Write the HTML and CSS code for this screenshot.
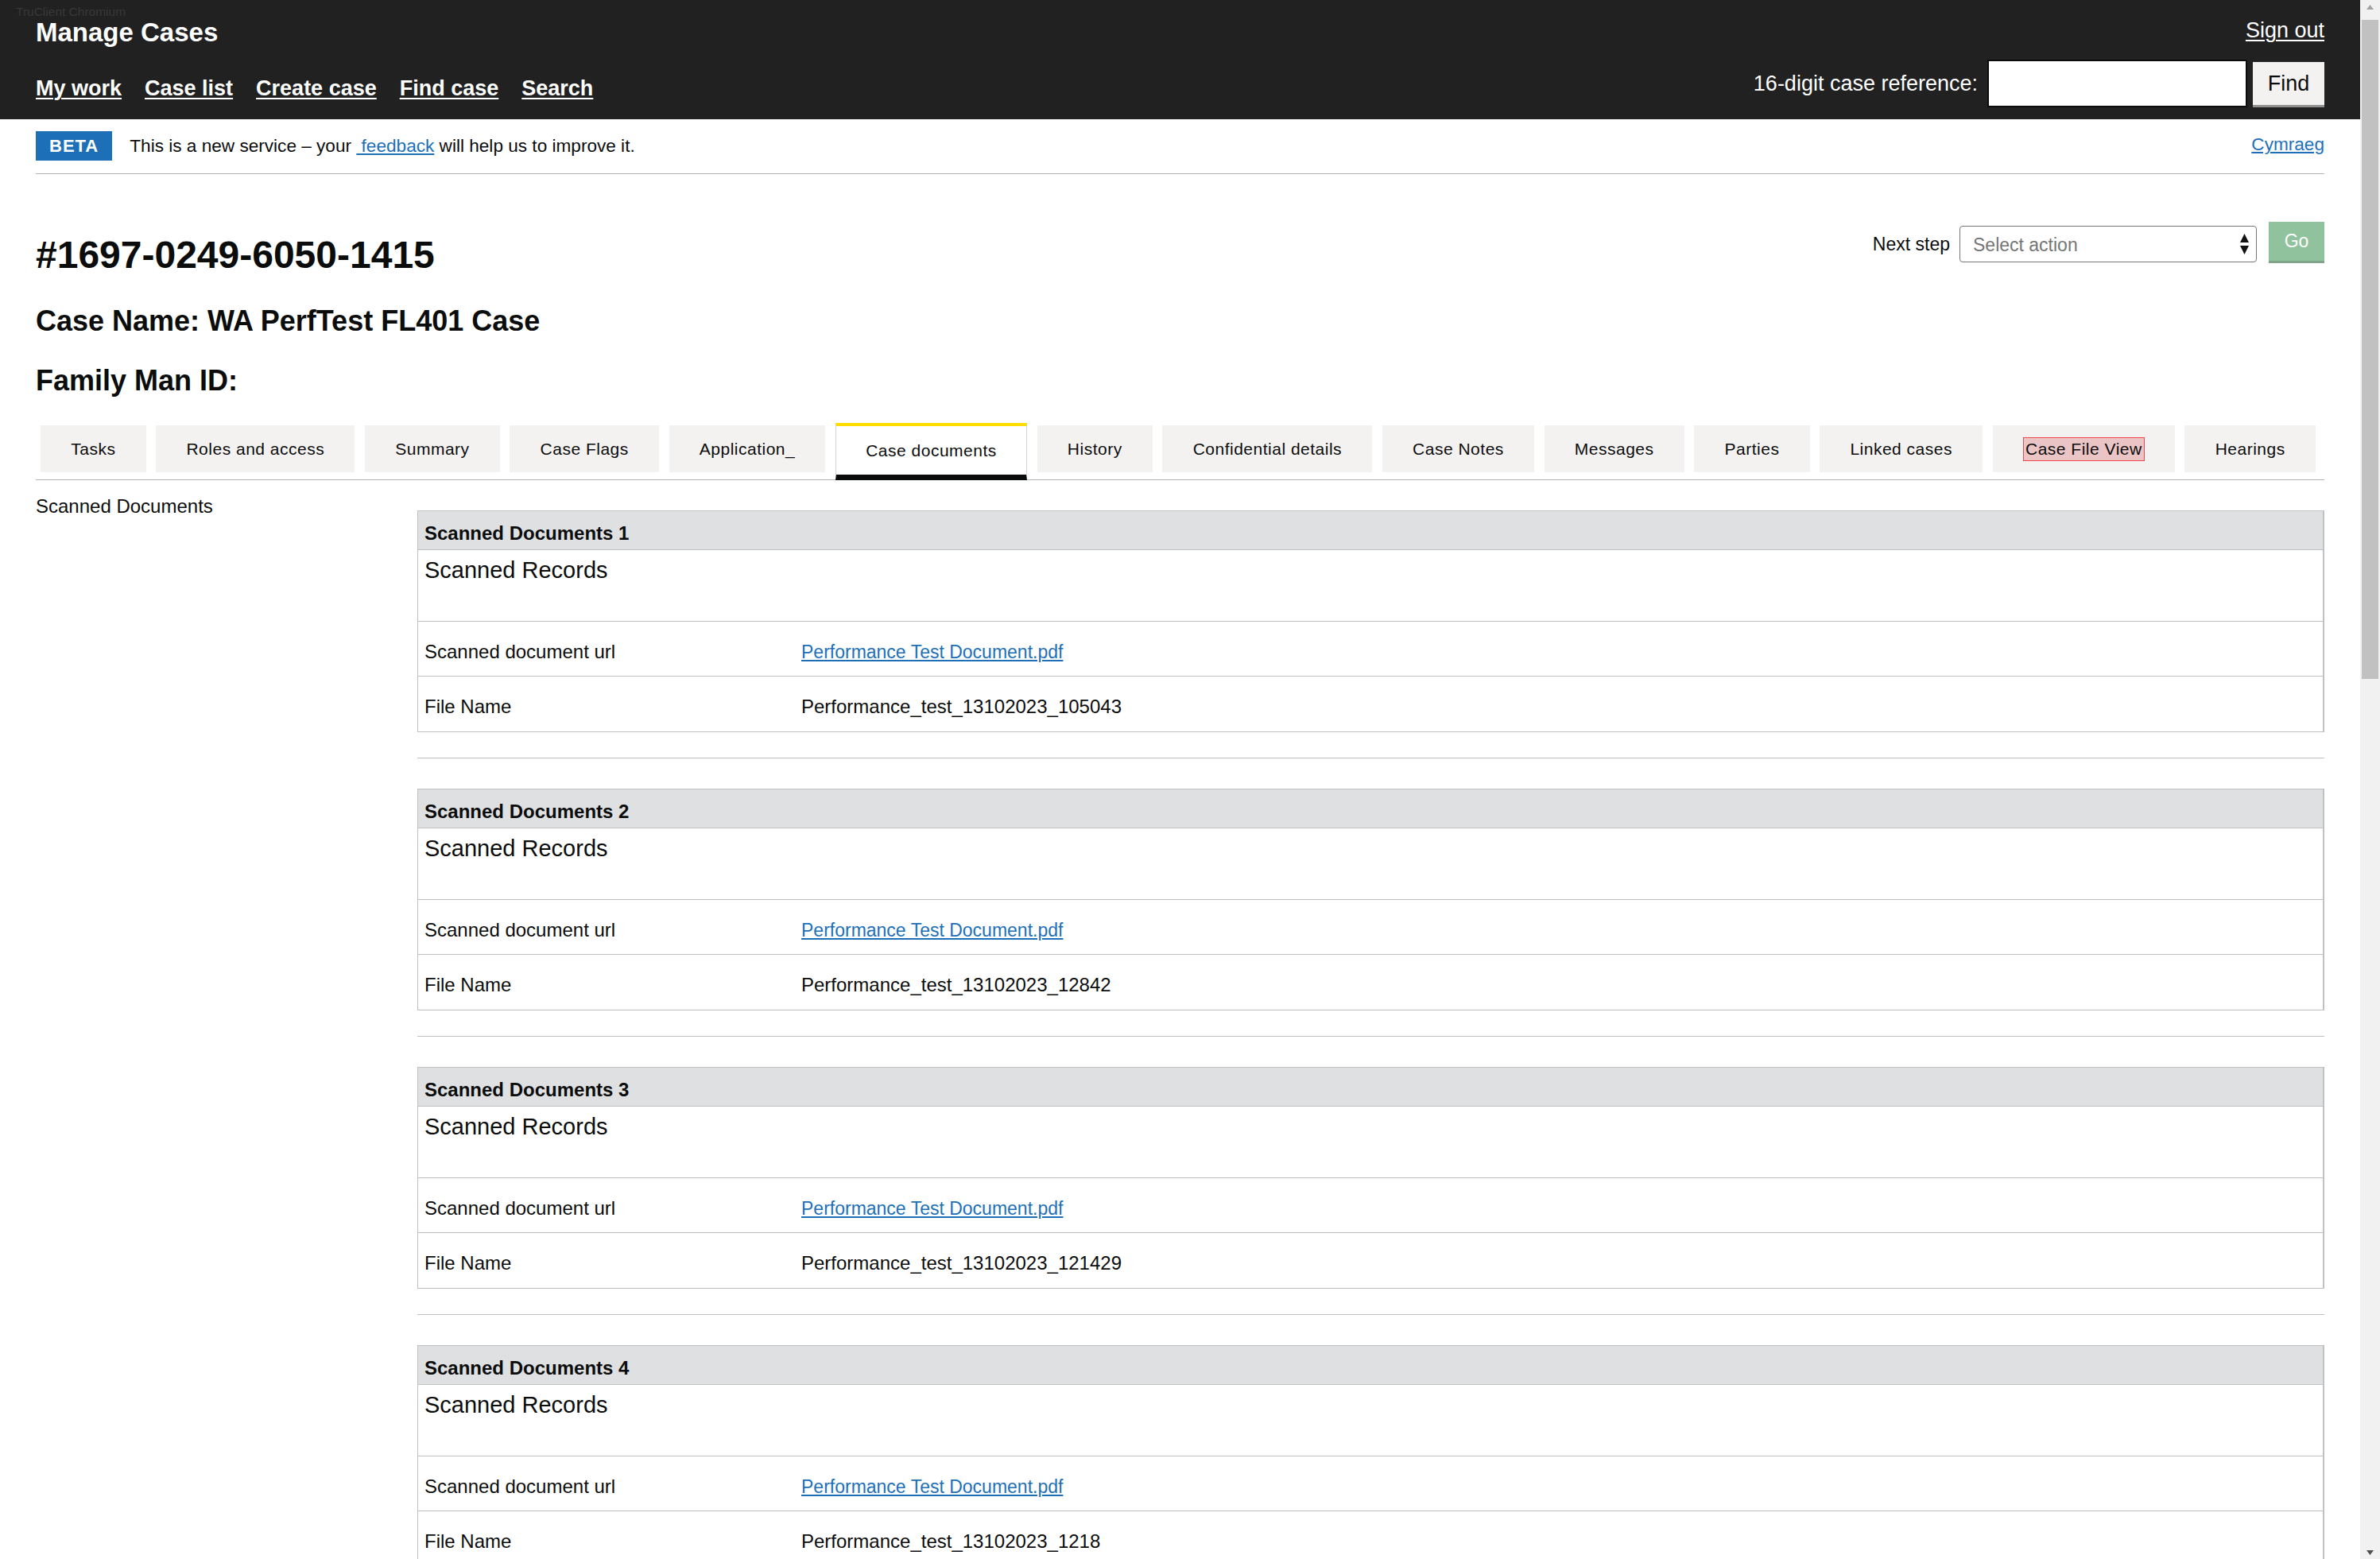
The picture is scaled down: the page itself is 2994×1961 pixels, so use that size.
FILE: index.html
```html
<!DOCTYPE html>
<html lang="en">
<head>
<meta charset="utf-8">
<title>Manage Cases</title>
<link rel="stylesheet" href="styles.css">
</head>
<body>
<div class="viewport">
  <div class="page">
    <div class="trc">TruClient Chromium</div>
    <header class="hdr">
      <div class="hdr-left">
        <div class="brand">Manage Cases</div>
        <nav class="nav">
          <a href="#">My work</a>
          <a href="#">Case list</a>
          <a href="#">Create case</a>
          <a href="#">Find case</a>
          <a href="#">Search</a>
        </nav>
      </div>
      <div class="hdr-right">
        <a class="signout" href="#">Sign out</a>
        <div class="find">
          <span class="find-label">16-digit case reference:</span>
          <span class="find-input"></span>
          <span class="find-btn">Find</span>
        </div>
      </div>
    </header>

    <main class="main">
      <div class="phase">
        <strong class="tag">BETA</strong>
        <span class="phase-text">This is a new service – your <a href="#">&nbsp;feedback</a> will help us to improve it.</span>
        <a class="cymraeg" href="#">Cymraeg</a>
      </div>

      <div class="case-head">
        <div class="titles">
          <h1 class="case-ref">#1697-0249-6050-1415</h1>
          <h2 class="case-sub first">Case Name: WA PerfTest FL401 Case</h2>
          <h2 class="case-sub">Family Man ID:</h2>
        </div>
        <div class="next">
          <span class="next-label">Next step</span>
          <div class="select">
            <span>Select action</span>
            <svg class="sel-arrows" width="11" height="26" viewBox="0 0 11 26"><polygon points="5.5,0 11,11 0,11" fill="#111"/><polygon points="0,15 11,15 5.5,26" fill="#111"/></svg>
          </div>
          <span class="go">Go</span>
        </div>
      </div>

      <div class="tabs">
        <div class="tab">Tasks</div>
        <div class="tab">Roles and access</div>
        <div class="tab">Summary</div>
        <div class="tab">Case Flags</div>
        <div class="tab">Application_</div>
        <div class="tab sel">Case documents</div>
        <div class="tab">History</div>
        <div class="tab">Confidential details</div>
        <div class="tab">Case Notes</div>
        <div class="tab">Messages</div>
        <div class="tab">Parties</div>
        <div class="tab">Linked cases</div>
        <div class="tab"><span class="cfv">Case File View</span></div>
        <div class="tab">Hearings</div>
      </div>

      <div class="tab-body">
        <div class="side">Scanned Documents</div>
        <div class="collection">
          <div class="doc">
            <div class="doc-hd">Scanned Documents 1</div>
            <div class="doc-rec">Scanned Records</div>
            <div class="kv"><span class="key">Scanned document url</span><span class="val"><a href="#">Performance Test Document.pdf</a></span></div>
            <div class="kv"><span class="key">File Name</span><span class="val">Performance_test_13102023_105043</span></div>
          </div>
          <div class="sep"></div>
          <div class="doc">
            <div class="doc-hd">Scanned Documents 2</div>
            <div class="doc-rec">Scanned Records</div>
            <div class="kv"><span class="key">Scanned document url</span><span class="val"><a href="#">Performance Test Document.pdf</a></span></div>
            <div class="kv"><span class="key">File Name</span><span class="val">Performance_test_13102023_12842</span></div>
          </div>
          <div class="sep"></div>
          <div class="doc">
            <div class="doc-hd">Scanned Documents 3</div>
            <div class="doc-rec">Scanned Records</div>
            <div class="kv"><span class="key">Scanned document url</span><span class="val"><a href="#">Performance Test Document.pdf</a></span></div>
            <div class="kv"><span class="key">File Name</span><span class="val">Performance_test_13102023_121429</span></div>
          </div>
          <div class="sep"></div>
          <div class="doc">
            <div class="doc-hd">Scanned Documents 4</div>
            <div class="doc-rec">Scanned Records</div>
            <div class="kv"><span class="key">Scanned document url</span><span class="val"><a href="#">Performance Test Document.pdf</a></span></div>
            <div class="kv"><span class="key">File Name</span><span class="val">Performance_test_13102023_1218</span></div>
          </div>
        </div>
      </div>
    </main>
  </div>

  <div class="scrollbar">
    <div class="sb-btn"><svg width="9" height="6" viewBox="0 0 9 6"><polygon points="4.5,0 9,6 0,6" fill="#a3a3a3"/></svg></div>
    <div class="sb-thumb"></div>
    <div class="sb-space"></div>
    <div class="sb-btn"><svg width="9" height="6" viewBox="0 0 9 6"><polygon points="0,0 9,0 4.5,6" fill="#505050"/></svg></div>
  </div>
</div>
</body>
</html>
```

FILE: styles.css
```css
* { box-sizing: border-box; }
html, body { margin: 0; padding: 0; }
body {
  font-family: "Liberation Sans", Arial, sans-serif;
  color: #0b0c0c;
  background: #fff;
}
a { color: #1d70b8; }

.viewport { display: flex; width: 2994px; height: 1961px; overflow: hidden; }
.page { flex: 1; min-width: 0; height: 1961px; overflow: hidden; position: relative; }

/* fake classic scrollbar */
.scrollbar { width: 25px; flex: none; background: #f1f1f1; display: flex; flex-direction: column; }
.sb-btn { height: 17px; display: flex; align-items: center; justify-content: center; }
.sb-thumb { height: 829px; margin: 8px 2px 0; background: #c1c1c1; }
.sb-space { flex: 1; }

/* header */
.trc { position: absolute; left: 20px; top: 6px; font-size: 15.5px; line-height: 18px; color: #383838; }
.hdr {
  height: 150px; background: #212121; color: #fff;
  padding: 24px 45px 0;
  display: flex; justify-content: space-between; align-items: flex-start;
}
.brand { font-weight: 700; font-size: 33px; line-height: 33px; }
.nav { display: flex; gap: 29px; margin-top: 41px; }
.nav a {
  color: #fff; font-weight: 700; font-size: 27px; line-height: 27px;
  text-decoration: underline; text-decoration-thickness: 2px; text-underline-offset: 3px;
}
.hdr-right { display: flex; flex-direction: column; align-items: flex-end; }
.signout {
  color: #fff; font-size: 27px; line-height: 27px; margin-top: 1px;
  text-decoration: underline; text-decoration-thickness: 2px; text-underline-offset: 3px;
}
.find { display: flex; align-items: center; height: 60px; margin-top: 23px; }
.find-label { font-size: 27px; line-height: 27px; margin-right: 12px; }
.find-input { width: 327px; height: 60px; border: 2px solid #0b0c0c; background: #fff; }
.find-btn {
  margin-left: 7px; width: 90px; height: 54px; background: #f3f2f1; color: #0b0c0c;
  box-shadow: 0 3px 0 #929191; font-size: 27px;
  display: flex; align-items: center; justify-content: center;
}

/* main */
.main { padding: 0 45px; }
.phase {
  display: flex; align-items: flex-start;
  padding: 15px 0 16px; border-bottom: 1px solid #b1b4b6;
}
.tag {
  background: #1d70b8; color: #fff; font-weight: 700; font-size: 22px;
  height: 37px; line-height: 37px; padding: 0 17px; letter-spacing: 1px;
}
.phase-text { margin-left: 22px; font-size: 22.6px; line-height: 37px; flex: 1; }
.phase-text a { color: #1d70b8; text-underline-offset: 2px; }
.cymraeg { font-size: 22.6px; line-height: 33px; color: #1d70b8; }

.case-head { display: flex; justify-content: space-between; align-items: flex-start; padding-top: 60px; }
.case-ref { margin: 18px 0 0; font-size: 48px; line-height: 48px; font-weight: 700; }
.case-sub { margin: 39px 0 0; font-size: 36px; line-height: 36px; font-weight: 700; }
.case-sub.first { margin-top: 41px; }

.next { display: flex; align-items: flex-start; }
.next-label { font-size: 23px; line-height: 46px; margin-top: 5px; margin-right: 12px; }
.select {
  margin-top: 5px; width: 374px; height: 46px;
  border: 1px solid #767676; border-radius: 4px;
  display: flex; align-items: center; justify-content: space-between;
  padding: 2px 9px 0 16px; font-size: 23px; color: #757575;
}
.sel-arrows { margin-top: -2px; }
.go {
  margin-left: 15px; width: 70px; height: 49px;
  background: #91c29e; box-shadow: 0 3px 0 #7fa489; color: #fff; font-size: 23px;
  display: flex; align-items: center; justify-content: center;
}

/* tabs */
.tabs {
  display: flex; align-items: flex-start; gap: 12.5px;
  padding-left: 6px; margin-top: 35px;
  border-bottom: 1px solid #b1b4b6;
}
.tab {
  margin-top: 3px; height: 59px; padding: 0 38.25px;
  background: #f3f2f1; color: #0b0c0c;
  display: flex; align-items: center;
  font-size: 21px; letter-spacing: 0.5px; white-space: nowrap;
}
.tab.sel {
  margin-top: 0; margin-bottom: -1px; height: 72px; background: #fff;
  border-top: 4px solid #ffdd00; border-bottom: 7px solid #0b0c0c;
  border-left: 1px solid #d4d4d4; border-right: 1px solid #d4d4d4;
  padding: 0 37.25px;
}
.cfv {
  display: inline-block; line-height: 28px; padding: 0 2px;
  background: #ebc5c5; border: 1px solid #f2464c;
}

/* tab body */
.tab-body { display: flex; padding-top: 21px; }
.side { width: 480px; flex: none; font-size: 24px; line-height: 24px; }
.collection { flex: 1; min-width: 0; padding-top: 17px; }
.doc { border: 1px solid #bfc1c3; border-right-width: 2px; }
.doc-hd {
  height: 49px; background: #dee0e2; border-bottom: 1px solid #bfc1c3;
  padding: 16px 8px 0; font-weight: 700; font-size: 24px; line-height: 24px;
}
.doc-rec {
  height: 90px; border-bottom: 1px solid #bfc1c3;
  padding: 11px 8px 0; font-size: 29px; line-height: 29px;
}
.kv {
  display: flex; align-items: center; height: 69px; padding-top: 7px;
  border-bottom: 1px solid #bfc1c3; font-size: 24px; line-height: 24px;
}
.kv:last-child { border-bottom: 0; }
.key { width: 482px; flex: none; padding-left: 8px; }
.val a { font-size: 23px; color: #1d70b8; text-underline-offset: 2px; }
.sep { height: 1px; background: #bfc1c3; margin: 32px 0 38px; }
```
